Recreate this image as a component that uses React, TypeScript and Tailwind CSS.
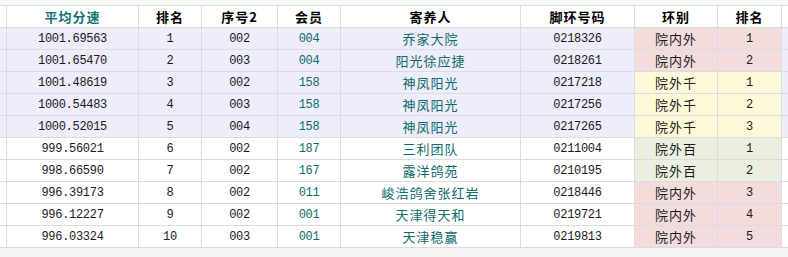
import React from "react";

type Row = {
  speed: string;
  rank: string;
  seq: string;
  member: string;
  owner: string;
  ring: string;
  zone: string;
  zrank: string;
  tone: "pink" | "yellow" | "green";
};

const rows: Row[] = [
  { speed: "1001.69563", rank: "1", seq: "002", member: "004", owner: "乔家大院", ring: "0218326", zone: "院内外", zrank: "1", tone: "pink" },
  { speed: "1001.65470", rank: "2", seq: "003", member: "004", owner: "阳光徐应捷", ring: "0218261", zone: "院内外", zrank: "2", tone: "pink" },
  { speed: "1001.48619", rank: "3", seq: "002", member: "158", owner: "神凤阳光", ring: "0217218", zone: "院外千", zrank: "1", tone: "yellow" },
  { speed: "1000.54483", rank: "4", seq: "003", member: "158", owner: "神凤阳光", ring: "0217256", zone: "院外千", zrank: "2", tone: "yellow" },
  { speed: "1000.52015", rank: "5", seq: "004", member: "158", owner: "神凤阳光", ring: "0217265", zone: "院外千", zrank: "3", tone: "yellow" },
  { speed: "999.56021", rank: "6", seq: "002", member: "187", owner: "三利团队", ring: "0211004", zone: "院外百", zrank: "1", tone: "green" },
  { speed: "998.66590", rank: "7", seq: "002", member: "167", owner: "露洋鸽苑", ring: "0210195", zone: "院外百", zrank: "2", tone: "green" },
  { speed: "996.39173", rank: "8", seq: "002", member: "011", owner: "峻浩鸽舍张红岩", ring: "0218446", zone: "院内外", zrank: "3", tone: "pink" },
  { speed: "996.12227", rank: "9", seq: "002", member: "001", owner: "天津得天和", ring: "0219721", zone: "院内外", zrank: "4", tone: "pink" },
  { speed: "996.03324", rank: "10", seq: "003", member: "001", owner: "天津稳赢", ring: "0219813", zone: "院内外", zrank: "5", tone: "pink" },
];

const num = "font-['Liberation_Mono','Noto_Sans_CJK_SC',monospace] text-[12px] tracking-[-0.3px]";
const cjk = "font-['Noto_Sans_CJK_SC',sans-serif] text-[13px] tracking-[1px]";
const cell = "box-border h-full flex items-center justify-center border-r border-[#dcdcdc] shrink-0 overflow-hidden whitespace-nowrap";

function toneBg(t: Row["tone"]) {
  if (t === "pink") return "bg-[#f2dcdc]";
  if (t === "yellow") return "bg-[#fefad9]";
  return "bg-[#ebefdf]";
}

export default function App() {
  return (
    <div className="w-[788px] h-[257px] bg-[#f5f5f5] overflow-hidden">
      <div className="h-[5px] bg-[#f5faf5]" />
      {/* header */}
      <div className="flex h-[23px] bg-white border-y border-[#dcdcdc] box-border">
        <div className={`${cell} w-[7px]`} />
        <div className={`${cell} w-[132px] text-[#137373] font-bold ${cjk}`}>平均分速</div>
        <div className={`${cell} w-[63px] text-black font-bold ${cjk}`}>排名</div>
        <div className={`${cell} w-[76px] text-black font-bold ${cjk}`}>序号2</div>
        <div className={`${cell} w-[63px] text-black font-bold ${cjk}`}>会员</div>
        <div className={`${cell} w-[180px] text-black font-bold ${cjk}`}>寄养人</div>
        <div className={`${cell} w-[114px] text-black font-bold ${cjk}`}>脚环号码</div>
        <div className={`${cell} w-[83px] text-black font-bold ${cjk}`}>环别</div>
        <div className={`${cell} w-[64px] text-black font-bold ${cjk}`}>排名</div>
        <div className="flex-1" />
      </div>
      {rows.map((r, i) => {
        const bg = i < 5 ? "bg-[#ededfb]" : "bg-white";
        const tb = toneBg(r.tone);
        return (
          <div key={i} className={`flex h-[22px] border-b border-[#dcdcdc] box-border ${bg}`}>
            <div className={`${cell} w-[7px]`} />
            <div className={`${cell} w-[132px] text-[#1a1a1a] ${num}`}>{r.speed}</div>
            <div className={`${cell} w-[63px] text-[#1a1a1a] ${num}`}>{r.rank}</div>
            <div className={`${cell} w-[76px] text-[#1a1a1a] ${num}`}>{r.seq}</div>
            <div className={`${cell} w-[63px] text-[#0d6b6b] ${num}`}>{r.member}</div>
            <div className={`${cell} w-[180px] text-[#0d6b6b] ${cjk}`}>{r.owner}</div>
            <div className={`${cell} w-[114px] text-[#1a1a1a] ${num}`}>{r.ring}</div>
            <div className={`${cell} w-[83px] text-[#1a1a1a] ${cjk} ${tb}`}>{r.zone}</div>
            <div className={`${cell} w-[64px] text-[#1a1a1a] ${num} ${tb}`}>{r.zrank}</div>
            <div className="flex-1" />
          </div>
        );
      })}
    </div>
  );
}
